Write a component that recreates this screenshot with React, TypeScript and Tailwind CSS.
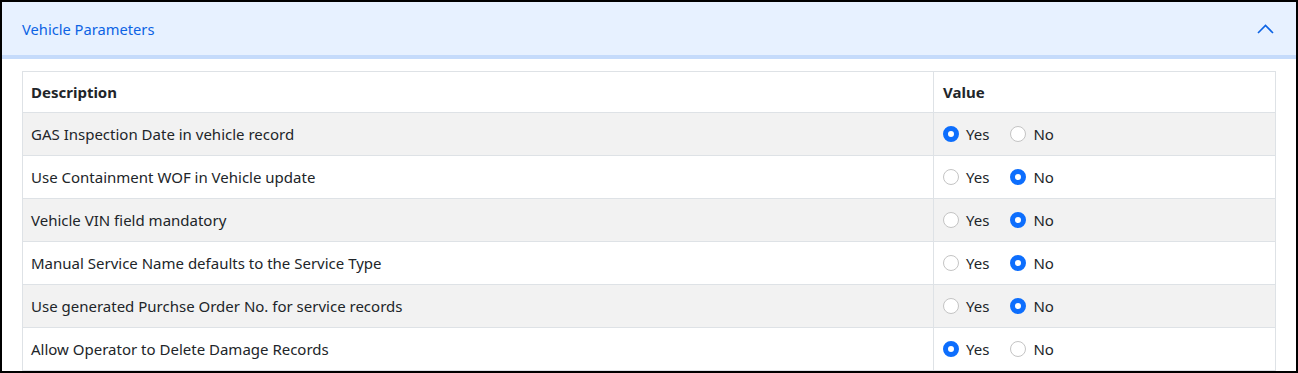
const rows: { label: string; yes: boolean }[] = [
  { label: "GAS Inspection Date in vehicle record", yes: true },
  { label: "Use Containment WOF in Vehicle update", yes: false },
  { label: "Vehicle VIN field mandatory", yes: false },
  { label: "Manual Service Name defaults to the Service Type", yes: false },
  { label: "Use generated Purchse Order No. for service records", yes: false },
  { label: "Allow Operator to Delete Damage Records", yes: true },
];

function Radio({ checked, label }: { checked: boolean; label: string }) {
  return (
    <label className="flex items-center gap-[7px]">
      {checked ? (
        <span className="h-4 w-4 rounded-full border-[5px] border-[#0d6efd] bg-white" />
      ) : (
        <span className="h-4 w-4 rounded-full border border-[#c4c4c4] bg-white" />
      )}
      <span>{label}</span>
    </label>
  );
}

export default function App() {
  return (
    <div
      className="h-[373px] overflow-hidden border-2 border-black bg-white text-[15px] text-[#212529]"
      style={{ fontFamily: '"Segoe UI", "Noto Sans", sans-serif' }}
    >
      <div className="flex h-[53px] items-center justify-between bg-[#e7f1ff] pl-5 pr-[22px] text-[14.7px] text-[#0c63e4]">
        <span className="pt-[2px]">Vehicle Parameters</span>
        <svg width="17" height="10" viewBox="0 0 17 10" fill="none">
          <path d="M1 9 L8.5 1.5 L16 9" stroke="#0c63e4" strokeWidth="1.6" />
        </svg>
      </div>
      <div className="h-1 bg-[#c5dbfb]" />
      <div className="px-5 pt-[12px]">
        <table className="w-full border-collapse border border-[#dee2e6]">
          <thead>
            <tr className="h-[41px]">
              <th className="w-[911px] border border-[#dee2e6] px-2 text-left font-bold">Description</th>
              <th className="border border-[#dee2e6] px-[9px] text-left font-bold">Value</th>
            </tr>
          </thead>
          <tbody>
            {rows.map((r, i) => (
              <tr key={r.label} className={"h-[43px] " + (i % 2 === 0 ? "bg-[#f2f2f2]" : "bg-white")}>
                <td className="border border-[#dee2e6] px-2">{r.label}</td>
                <td className="border border-[#dee2e6] px-[9px]">
                  <div className="flex items-center gap-[21px]">
                    <Radio checked={r.yes} label="Yes" />
                    <Radio checked={!r.yes} label="No" />
                  </div>
                </td>
              </tr>
            ))}
          </tbody>
        </table>
      </div>
    </div>
  );
}
